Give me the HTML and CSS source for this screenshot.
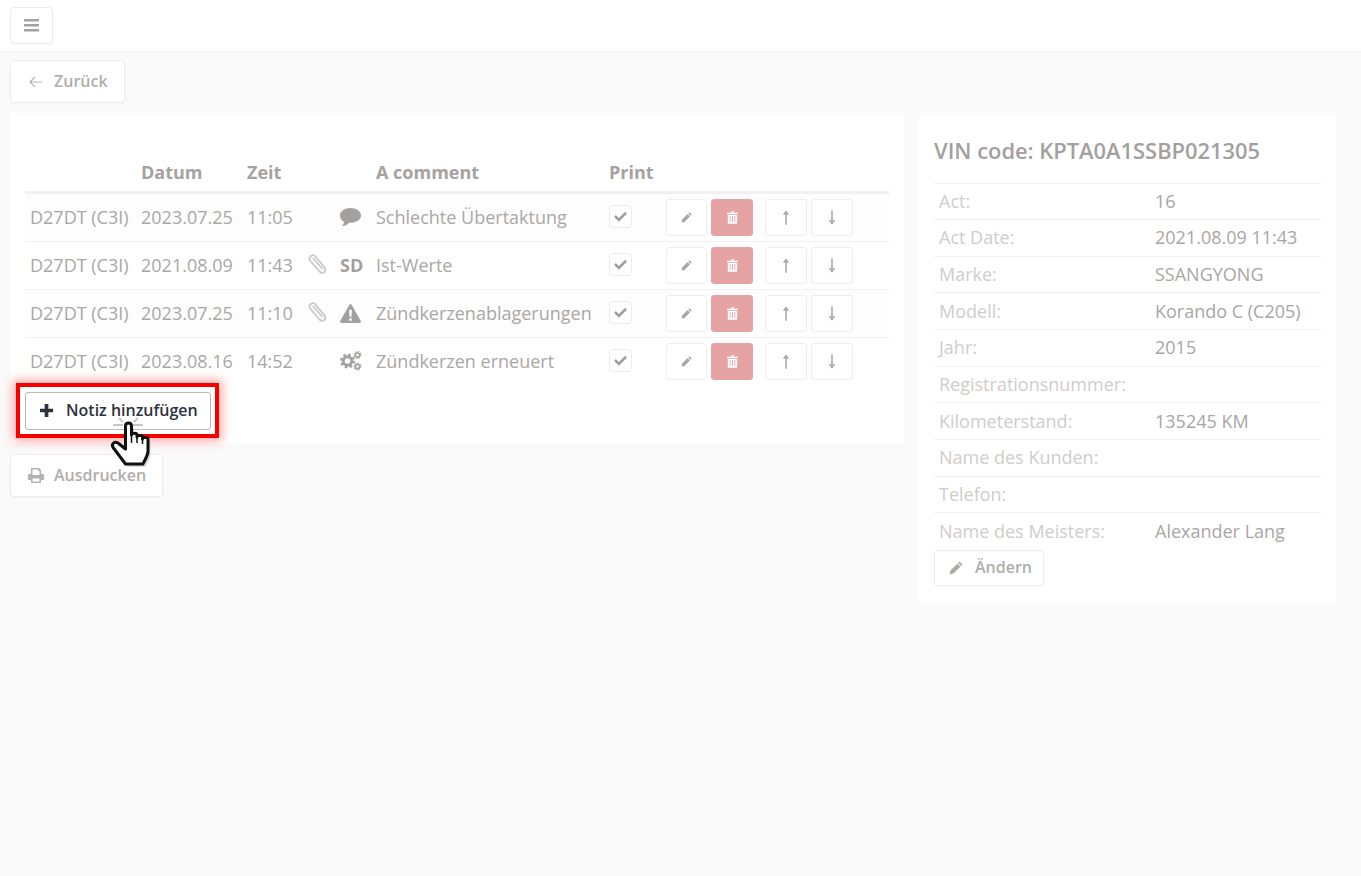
FILE: index.html
```html
<!DOCTYPE html>
<html lang="de">
<head>
<meta charset="utf-8">
<title>Notizen</title>
<link rel="stylesheet" href="styles.css">
</head>
<body>
<svg class="defs" width="0" height="0" aria-hidden="true">
  <symbol id="i-edit" viewBox="0 0 16 16"><path d="M11.200 1.600l3.200 3.200-1.500 1.500-3.200-3.200zM8.900 3.900l3.200 3.200-7.400 7.400-4 .8.8-4z"/></symbol>
  <symbol id="i-trash" viewBox="0 0 14 16"><path d="M4.600 1.900L5.300.6C5.500.2 5.800 0 6.200 0h1.600c.4 0 .7.2.9.6l.7 1.300H14v1.600H0V1.900zM6 1.900h2L7.600 1.100H6.400zM1 4.400h12v10.200c0 .8-.6 1.400-1.400 1.400H2.400C1.600 16 1 15.400 1 14.600zM3.500 6v8h1V6zM6.500 6v8h1V6zM9.500 6v8h1V6z" fill-rule="evenodd"/></symbol>
  <symbol id="i-up" viewBox="0 0 10 18"><path d="M5 0l4 5.500H6V18H4V5.500H1z"/></symbol>
  <symbol id="i-down" viewBox="0 0 10 18"><path d="M5 18l4-5.500H6V0H4v12.500H1z"/></symbol>
  <symbol id="i-check" viewBox="0 0 16 13"><path d="M6 13L0 7l2.300-2.300L6 8.400 13.700.7 16 3z"/></symbol>
  <symbol id="i-clip" viewBox="0 0 20 21"><path d="M17.500 14.500L8.500 3.500C6 .5.800 3.500 3 7.500l9.500 11c3 3 7.500.5 5-4M6.500 5.500l8.500 10" fill="none" stroke="currentColor" stroke-width="1.800" stroke-linecap="round"/></symbol>
  <symbol id="i-comment" viewBox="0 0 20 18"><path d="M10 0c5.500 0 10 3.100 10 7s-4.500 7-10 7h-1.200C7.400 15.600 5 17 1.800 17.400c1.200-1.200 2-2.500 2.100-4.300C1.500 11.800 0 9.600 0 7c0-3.900 4.500-7 10-7z"/></symbol>
  <symbol id="i-warn" viewBox="0 0 20 18"><path fill-rule="evenodd" d="M10 0c.5 0 .9.300 1.100.7l8.700 15.400c.5.800-.1 1.900-1.100 1.900H1.300C.3 18-.3 16.900.2 16.100L8.900.7C9.100.3 9.500 0 10 0zM8.700 5.500l.3 6.500h2l.3-6.500zM8.800 13.500V16h2.400v-2.500z"/></symbol>
  <symbol id="i-gears" viewBox="0 0 22 20">
    <circle cx="7.500" cy="10" r="4.300" fill="none" stroke="currentColor" stroke-width="3"/>
    <circle cx="7.500" cy="10" r="6.400" fill="none" stroke="currentColor" stroke-width="2.200" stroke-dasharray="2.500 2.530"/>
    <circle cx="17.500" cy="4" r="2.100" fill="none" stroke="currentColor" stroke-width="1.500"/>
    <circle cx="17.500" cy="4" r="3.300" fill="none" stroke="currentColor" stroke-width="1.400" stroke-dasharray="1.300 1.290"/>
    <circle cx="17.500" cy="15.500" r="2.100" fill="none" stroke="currentColor" stroke-width="1.500"/>
    <circle cx="17.500" cy="15.500" r="3.300" fill="none" stroke="currentColor" stroke-width="1.400" stroke-dasharray="1.300 1.290"/>
  </symbol>
</svg>

<header class="topbar">
  <button class="btn btn-menu" type="button" aria-label="Menü">
    <svg class="ico-bars" viewBox="0 0 15 13"><path d="M0 0h15v2.500H0zM0 5h15v2.500H0zM0 10h15v2.500H0z"/></svg>
  </button>
</header>

<main class="page">
  <button class="btn btn-back" type="button">
    <svg class="ico-back" viewBox="0 0 14 12"><path d="M6 1L1 6l5 5M1 6h12" fill="none" stroke="currentColor" stroke-width="1.200"/></svg>
    Zurück
  </button>

  <div class="columns">
    <div class="left">
      <section class="card card-notes">
        <table class="notes">
          <colgroup>
            <col class="c-motor"><col class="c-date"><col class="c-time"><col class="c-clip"><col class="c-type"><col class="c-text"><col class="c-print"><col>
          </colgroup>
          <thead>
            <tr><th></th><th>Datum</th><th>Zeit</th><th></th><th></th><th>A comment</th><th>Print</th><th></th></tr>
          </thead>
          <tbody>
            <tr>
              <td>D27DT (C3I)</td><td>2023.07.25</td><td>11:05</td><td></td>
              <td><svg class="ti ti-comment"><use href="#i-comment"/></svg></td>
              <td>Schlechte Übertaktung</td>
              <td><span class="check"><svg><use href="#i-check"/></svg></span></td>
              <td><div class="acts"><button class="ab" type="button"><svg class="a-edit"><use href="#i-edit"/></svg></button><button class="ab ab-del" type="button"><svg class="a-trash"><use href="#i-trash"/></svg></button><button class="ab ab-up" type="button"><svg class="a-arrow"><use href="#i-up"/></svg></button><button class="ab" type="button"><svg class="a-arrow"><use href="#i-down"/></svg></button></div></td>
            </tr>
            <tr>
              <td>D27DT (C3I)</td><td>2021.08.09</td><td>11:43</td>
              <td><svg class="ti-clip"><use href="#i-clip"/></svg></td>
              <td class="sd">SD</td>
              <td>Ist-Werte</td>
              <td><span class="check"><svg><use href="#i-check"/></svg></span></td>
              <td><div class="acts"><button class="ab" type="button"><svg class="a-edit"><use href="#i-edit"/></svg></button><button class="ab ab-del" type="button"><svg class="a-trash"><use href="#i-trash"/></svg></button><button class="ab ab-up" type="button"><svg class="a-arrow"><use href="#i-up"/></svg></button><button class="ab" type="button"><svg class="a-arrow"><use href="#i-down"/></svg></button></div></td>
            </tr>
            <tr>
              <td>D27DT (C3I)</td><td>2023.07.25</td><td>11:10</td>
              <td><svg class="ti-clip"><use href="#i-clip"/></svg></td>
              <td><svg class="ti ti-warn"><use href="#i-warn"/></svg></td>
              <td>Zündkerzenablagerungen</td>
              <td><span class="check"><svg><use href="#i-check"/></svg></span></td>
              <td><div class="acts"><button class="ab" type="button"><svg class="a-edit"><use href="#i-edit"/></svg></button><button class="ab ab-del" type="button"><svg class="a-trash"><use href="#i-trash"/></svg></button><button class="ab ab-up" type="button"><svg class="a-arrow"><use href="#i-up"/></svg></button><button class="ab" type="button"><svg class="a-arrow"><use href="#i-down"/></svg></button></div></td>
            </tr>
            <tr>
              <td>D27DT (C3I)</td><td>2023.08.16</td><td>14:52</td><td></td>
              <td><svg class="ti ti-gears"><use href="#i-gears"/></svg></td>
              <td>Zündkerzen erneuert</td>
              <td><span class="check"><svg><use href="#i-check"/></svg></span></td>
              <td><div class="acts"><button class="ab" type="button"><svg class="a-edit"><use href="#i-edit"/></svg></button><button class="ab ab-del" type="button"><svg class="a-trash"><use href="#i-trash"/></svg></button><button class="ab ab-up" type="button"><svg class="a-arrow"><use href="#i-up"/></svg></button><button class="ab" type="button"><svg class="a-arrow"><use href="#i-down"/></svg></button></div></td>
            </tr>
          </tbody>
        </table>

        <div class="add-wrap">
          <button class="btn-add" type="button">
            <svg class="ico-plus" viewBox="0 0 14 14"><path d="M5 0h4v5h5v4H9v5H5V9H0V5h5z"/></svg>
            Notiz hinzufügen
          </button>
          <span class="highlight"></span>
          <svg class="hand" viewBox="0 0 55 60">
            <path class="rays" d="M8 15h10M28 15h10M14 8l4 4M33 8l-4 4"/>
            <path class="hand-shadow" d="M23 19c0-4 6-4 6 0v9c0-2.500 5.500-2.500 5.500 0v2c0-2 5.500-2 5.500 0v2c0-2 5.500-2 5.500 0v12c0 5-3 8-5 13H23L11 41c-3-4 1-7 4.500-5l7.500 6z"/>
            <path class="hand-fill" d="M20.500 16c0-4 6-4 6 0v9c0-2.500 5.500-2.500 5.500 0v2c0-2 5.500-2 5.500 0v2c0-2 5.500-2 5.500 0v12c0 5-3 8-5 13H20.500L8.500 38c-3-4 1-7 4.500-5l7.500 6z"/>
            <path class="hand-lines" d="M26.500 25v8M32 27v6M37.500 29v5"/>
          </svg>
        </div>
      </section>

      <button class="btn btn-print" type="button">
        <svg class="ico-print" viewBox="0 0 16 15"><path fill-rule="evenodd" d="M3 0h8l2 2v4h1.500c.8 0 1.500.7 1.500 1.500V12h-3v3H3v-3H0V7.500C0 6.700.7 6 1.500 6H3zM4.500 1.500V7h7V3h-1.500V1.500zM4.500 10.500v3h7v-3z"/></svg>
        Ausdrucken
      </button>
    </div>

    <aside class="card card-info">
      <h2 class="vin">VIN code: KPTA0A1SSBP021305</h2>
      <table class="info">
        <tbody>
          <tr><th>Act:</th><td>16</td></tr>
          <tr><th>Act Date:</th><td>2021.08.09 11:43</td></tr>
          <tr><th>Marke:</th><td>SSANGYONG</td></tr>
          <tr><th>Modell:</th><td>Korando C (C205)</td></tr>
          <tr><th>Jahr:</th><td>2015</td></tr>
          <tr><th>Registrationsnummer:</th><td></td></tr>
          <tr><th>Kilometerstand:</th><td>135245 KM</td></tr>
          <tr><th>Name des Kunden:</th><td></td></tr>
          <tr><th>Telefon:</th><td></td></tr>
          <tr><th>Name des Meisters:</th><td>Alexander Lang</td></tr>
        </tbody>
      </table>
      <button class="btn btn-change" type="button">
        <svg class="ico-pen"><use href="#i-edit"/></svg>
        Ändern
      </button>
    </aside>
  </div>
</main>
</body>
</html>
```
FILE: styles.css
```css
* { box-sizing: border-box; }
html, body { margin: 0; padding: 0; }
body {
  background: #fafafa;
  font-family: "Open Sans", "Liberation Sans", sans-serif;
  font-size: 18px;
  color: #aaa7a5;
  min-height: 876px;
}
.defs { position: absolute; }
svg { fill: currentColor; display: block; }
button { font: inherit; margin: 0; cursor: pointer; }

.topbar {
  height: 52px;
  background: #fff;
  border-bottom: 1px solid #f4f4f4;
  padding: 7px 10px 0;
}
.page { padding: 8px 25px 0 10px; }

.btn {
  display: flex;
  align-items: center;
  background: #fff;
  border: 1px solid #ececec;
  border-radius: 4px;
  box-shadow: 0 1px 2px rgba(0,0,0,.03);
  color: #b0adab;
  font-weight: 600;
  font-size: 16px;
  padding: 0 0 2px;
}
.btn-menu { width: 43px; height: 37px; justify-content: center; color: #a3a3a3; padding: 0; }
.ico-bars { width: 15px; height: 13px; }
.btn-back { width: 115px; height: 43px; padding-left: 18px; gap: 11px; }
.ico-back { width: 14px; height: 12px; color: #b5b5b5; margin-top: 2px; }

.columns { display: flex; align-items: flex-start; gap: 15px; margin-top: 10px; }
.left { width: 894px; flex: none; }
.card { background: #fff; border-radius: 2px; }
.card-notes { height: 331px; padding: 40px 15px 0; }

table { border-collapse: collapse; }
.notes { width: 864px; table-layout: fixed; }
.c-motor { width: 111px; }
.c-date { width: 106px; }
.c-time { width: 60px; }
.c-clip { width: 33px; }
.c-type { width: 36px; }
.c-text { width: 233px; }
.c-print { width: 57px; }
.notes th {
  height: 39px;
  padding: 0 5px;
  text-align: left;
  font-size: 18px;
  font-weight: 700;
  color: #a5a29f;
  border-bottom: 3px solid #f1f1f1;
}
.notes td {
  height: 48px;
  padding: 0 5px;
  border-bottom: 1px solid #f1f1f1;
  white-space: nowrap;
}
.notes tbody tr:first-child td { height: 49px; }
.notes tbody tr:nth-child(odd) td { background: #fdfdfd; }
.notes tbody tr:last-child td { border-bottom: 0; }
.notes td.sd { font-weight: 700; color: #a3a09e; }

.ti { color: #a3a09e; }
.ti-comment { width: 21px; height: 19px; }
.ti-warn { width: 21px; height: 19px; }
.ti-gears { width: 22px; height: 20px; }
.ti-clip { width: 20px; height: 21px; color: #c9c9c9; margin-top: -3px; }

.check {
  display: flex;
  align-items: center;
  justify-content: center;
  width: 23px;
  height: 23px;
  border: 1px solid #ececec;
  border-radius: 4px;
  background: #fff;
  color: #a3a09e;
  margin-top: -2px;
}
.check svg { width: 13px; height: 11px; }

.acts { display: flex; gap: 4px; }
.ab {
  display: flex;
  align-items: center;
  justify-content: center;
  width: 42px;
  height: 37px;
  padding: 0;
  border: 1px solid #eeeeee;
  border-radius: 3px;
  background: #fff;
  color: #a9a6a4;
}
.ab:first-child { width: 41px; }
.ab-del { background: #e5a3a3; border-color: #e5a3a3; color: #fff; }
.ab-up { margin-left: 8px; }
.a-edit { width: 12px; height: 12px; }
.a-trash { width: 11px; height: 13px; }
.a-arrow { width: 8px; height: 15px; color: #a9aaac; }

.add-wrap { position: relative; margin-top: 7px; width: 186px; }
.btn-add {
  display: flex;
  align-items: center;
  gap: 13px;
  width: 186px;
  height: 38px;
  padding: 0 0 2px 14px;
  background: #fff;
  border: 1px solid #b9b9b9;
  border-radius: 3px;
  color: #2d3340;
  font-size: 16px;
  font-weight: 600;
}
.ico-plus { width: 13px; height: 13px; color: #2d3340; margin-top: 1px; }
.highlight {
  position: absolute;
  left: -9px;
  top: -9px;
  width: 203px;
  height: 55px;
  border: 4px solid #f60000;
  box-shadow: 0 0 10px 3px rgba(255,0,0,.35);
  pointer-events: none;
}
.hand {
  position: absolute;
  left: 80px;
  top: 18px;
  width: 55px;
  height: 60px;
  overflow: visible;
  pointer-events: none;
}
.rays { fill: none; stroke: #c8c8c8; stroke-width: 2; }
.hand-shadow { fill: rgba(0,0,0,.15); }
.hand-fill { fill: #fff; stroke: #111; stroke-width: 3; stroke-linejoin: round; }
.hand-lines { fill: none; stroke: #111; stroke-width: 1.500; }

.btn-print { width: 153px; height: 43px; margin-top: 10px; padding-left: 17px; gap: 10px; }
.ico-print { width: 16px; height: 15px; color: #b3b3b3; margin-top: 2px; }

.card-info { width: 417px; height: 488px; padding: 24px 15px 0; }
.vin { margin: 0; font-size: 21.900px; line-height: 28px; font-weight: 600; color: #a3a09e; height: 45.500px; }
.info { width: 387px; table-layout: fixed; }
.info tr { height: 36.667px; border-top: 1px solid #f1f1f1; }
.info th { width: 221px; padding: 0 5px 1px; text-align: left; font-weight: 400; color: #cfcdcc; white-space: nowrap; }
.info td { padding: 0 0 1px; color: #a9a6a4; white-space: nowrap; }
.btn-change { width: 110px; height: 36px; padding-left: 14px; gap: 11px; }
.ico-pen { width: 15px; height: 15px; color: #aaa7a5; margin-top: 2px; }
```
